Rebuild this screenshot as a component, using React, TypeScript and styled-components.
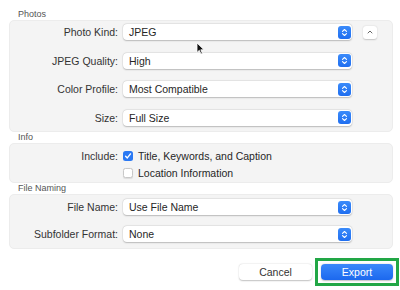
import React from 'react';
import styled, {createGlobalStyle} from 'styled-components';

const GlobalStyle = createGlobalStyle`
    html, body {
        margin: 0;
        padding: 0;
        background: #ffffff;
    }
    body {
        font-family: "Liberation Sans", Arial, sans-serif;
        color: #262626;
    }
`;

const Page = styled.div`
    position: relative;
    width: 400px;
    height: 290px;
    padding: 9px 7px 0 9px;
    box-sizing: border-box;
    display: flex;
    flex-direction: column;
`;

const SectionTitle = styled.div`
    font-size: 9px;
    color: #555;
    padding-left: 9px;
    height: 11px;
    line-height: 11px;
`;

const Panel = styled.div`
    background: #f4f4f4;
    border: 1px solid #ececec;
    border-radius: 5px;
    box-sizing: border-box;
    height: ${(props) => props.h}px;
    padding-top: ${(props) => props.pad}px;
    display: flex;
    flex-direction: column;
    gap: ${(props) => props.gap}px;
`;

const Row = styled.div`
    display: grid;
    grid-template-columns: 108px 229px auto;
    column-gap: 5px;
    align-items: center;
    height: 16px;
`;

const Label = styled.div`
    font-size: 10.5px;
    color: #333;
    text-align: right;
    white-space: nowrap;
`;

const Select = styled.div`
    height: 16px;
    background: #fff;
    border-radius: 4px;
    box-shadow: 0 0.5px 1.5px rgba(0, 0, 0, 0.22), 0 0 0 0.5px rgba(0, 0, 0, 0.06);
    display: flex;
    align-items: center;
    justify-content: space-between;
    padding: 0 1px 0 6px;
    box-sizing: border-box;
    font-size: 10.5px;
    color: #262626;
`;

const Stepper = styled.span`
    width: 13px;
    height: 13px;
    border-radius: 3px;
    background: linear-gradient(#3b8bfa, #1f6ef0);
    display: flex;
    align-items: center;
    justify-content: center;
`;

const DisclosureButton = styled.div`
    width: 14px;
    height: 13px;
    margin-left: 6px;
    background: #fff;
    border-radius: 3px;
    box-shadow: 0 0.5px 1.5px rgba(0, 0, 0, 0.2);
    display: flex;
    align-items: center;
    justify-content: center;
`;

const CheckRow = styled.div`
    display: flex;
    align-items: center;
    gap: 5px;
    font-size: 10.5px;
    color: #262626;
`;

const Box = styled.span`
    width: 10px;
    height: 10px;
    border-radius: 2.5px;
    box-sizing: border-box;
    display: flex;
    align-items: center;
    justify-content: center;
    background: ${(props) => props.checked ? '#2a78f3' : '#fff'};
    border: ${(props) => props.checked ? 'none' : '0.5px solid #c8c8c8'};
    box-shadow: ${(props) => props.checked ? 'none' : '0 0.5px 1px rgba(0,0,0,0.1)'};
`;

const Footer = styled.div`
    display: flex;
    justify-content: flex-end;
    align-items: center;
    gap: 9px;
    margin-top: 15px;
`;

const Button = styled.div`
    width: ${(props) => props.w}px;
    height: 16px;
    border-radius: 4px;
    font-size: 10.5px;
    display: flex;
    align-items: center;
    justify-content: center;
    background: ${(props) => props.primary ? 'linear-gradient(#3a88fb, #1c68ee)' : '#fff'};
    color: ${(props) => props.primary ? '#fff' : '#333'};
    box-shadow: 0 0.5px 1.5px rgba(0, 0, 0, 0.25);
`;

const Highlight = styled.div`
    border: 3px solid #22a746;
    padding: 3px;
    margin: -6px -6px -6px -6px;
`;

const Cursor = styled.svg`
    position: absolute;
    left: 196px;
    top: 42px;
`;

const StepIcon = () => (
    <Stepper>
        <svg width="7" height="9" viewBox="0 0 7 9">
            <path d="M1.5 3.3 L3.5 1.5 L5.5 3.3 M1.5 5.7 L3.5 7.5 L5.5 5.7" fill="none" stroke="#fff" strokeWidth="1.1" strokeLinecap="round" strokeLinejoin="round"/>
        </svg>
    </Stepper>
);

const PopUp = ({value}: {value: string}) => (
    <Select>
        <span>{value}</span>
        <StepIcon/>
    </Select>
);

const Field = ({label, value, extra}: {label: string; value: string; extra?: React.ReactNode}) => (
    <Row>
        <Label>{label}</Label>
        <PopUp value={value}/>
        {extra || <span/>}
    </Row>
);

const Check = ({checked, text}: {checked?: boolean; text: string}) => (
    <CheckRow>
        <Box checked={checked}>
            {checked && (
                <svg width="8" height="8" viewBox="0 0 8 8">
                    <path d="M1.6 4.2 L3.3 5.9 L6.5 1.9" fill="none" stroke="#fff" strokeWidth="1.4" strokeLinecap="round" strokeLinejoin="round"/>
                </svg>
            )}
        </Box>
        <span>{text}</span>
    </CheckRow>
);

export default function App() {
    return (
        <Page>
            <GlobalStyle/>
            <SectionTitle>Photos</SectionTitle>
            <Panel h={112} pad={3} gap={12.67}>
                <Field
                    label="Photo Kind:"
                    value="JPEG"
                    extra={
                        <DisclosureButton>
                            <svg width="6" height="4" viewBox="0 0 6 4">
                                <path d="M1 3 L3 1 L5 3" fill="none" stroke="#555" strokeWidth="0.9" strokeLinecap="round" strokeLinejoin="round"/>
                            </svg>
                        </DisclosureButton>
                    }
                />
                <Field label="JPEG Quality:" value="High"/>
                <Field label="Color Profile:" value="Most Compatible"/>
                <Field label="Size:" value="Full Size"/>
            </Panel>
            <SectionTitle>Info</SectionTitle>
            <Panel h={40} pad={4} gap={1}>
                <Row>
                    <Label>Include:</Label>
                    <Check checked text="Title, Keywords, and Caption"/>
                </Row>
                <Row>
                    <span/>
                    <Check text="Location Information"/>
                </Row>
            </Panel>
            <SectionTitle>File Naming</SectionTitle>
            <Panel h={55} pad={4} gap={11}>
                <Field label="File Name:" value="Use File Name"/>
                <Field label="Subfolder Format:" value="None"/>
            </Panel>
            <Footer>
                <Button w={73}>Cancel</Button>
                <Highlight>
                    <Button w={72} primary>Export</Button>
                </Highlight>
            </Footer>
            <Cursor width="9" height="13" viewBox="0 0 9 13">
                <path d="M1 1 L1 10.5 L3.3 8.3 L5 12 L6.4 11.4 L4.8 7.8 L8 7.8 Z" fill="#111" stroke="#fff" strokeWidth="0.8"/>
            </Cursor>
        </Page>
    );
}
